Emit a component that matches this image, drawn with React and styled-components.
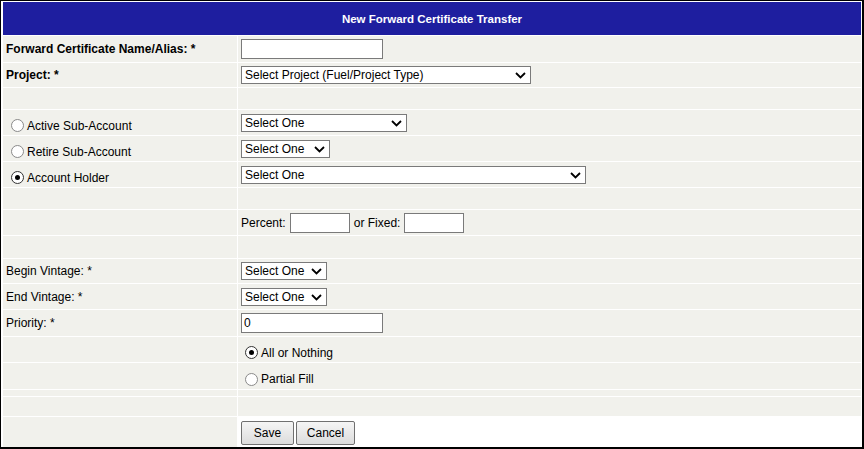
import React from 'react';
import styled, { createGlobalStyle } from 'styled-components';

const GlobalStyle = createGlobalStyle`
  body {
    margin: 0;
    background: #fff;
    font-family: "Liberation Sans", Arial, sans-serif;
    font-size: 12px;
    color: #000;
  }
`;

const Frame = styled.div`
  box-sizing: border-box;
  width: 864px;
  height: 449px;
  background: #fff;
  border-style: solid;
  border-color: #000;
  border-width: 1px 2px 2px 1px;
  padding: 1px 1px 0 2px;
`;

const Table = styled.div`
  display: flex;
  flex-direction: column;
  gap: 1px;
`;

const Header = styled.div`
  height: 33px;
  background: #1e1e9f;
  color: #fff;
  font-weight: bold;
  font-size: 11.5px;
  display: flex;
  align-items: center;
  justify-content: center;
`;

const Row = styled.div`
  display: grid;
  grid-template-columns: 234px 1fr;
  column-gap: 1px;
  height: ${(p) => p.$h}px;
`;

const Cell = styled.div`
  display: flex;
  align-items: center;
  gap: 4px;
  padding: 0 3px;
  background: ${(p) => (p.$blank ? '#fff' : '#f1f1ec')};
  font-weight: ${(p) => (p.$bold ? 'bold' : 'normal')};
  white-space: nowrap;
`;

// radio rows sit a few pixels below the row's middle
const RadioLabel = styled.label`
  display: flex;
  align-items: center;
  padding-top: 6px;
`;

const Radio = styled.input.attrs({ type: 'radio' })`
  appearance: none;
  box-sizing: border-box;
  width: 13px;
  height: 13px;
  margin: 0 3px 0 ${(p) => p.$inset ?? 5}px;
  border: 1px solid #8a8a8a;
  border-radius: 50%;
  background: #fff;
  display: grid;
  place-items: center;

  &:checked {
    border-color: #333;
  }

  &:checked::after {
    content: '';
    width: 5px;
    height: 5px;
    border-radius: 50%;
    background: #000;
  }
`;

const TextInput = styled.input`
  box-sizing: border-box;
  width: ${(p) => p.$w}px;
  height: 20px;
  margin: 0;
  padding: 0 2px;
  border: 1px solid #7a7a7a;
  font: 12px "Liberation Sans", Arial, sans-serif;
`;

const SelectBox = styled.span`
  position: relative;
  display: inline-flex;
  width: ${(p) => p.$w}px;
  height: 18px;
`;

const NativeSelect = styled.select`
  appearance: none;
  box-sizing: border-box;
  width: 100%;
  height: 100%;
  margin: 0;
  padding: 0 0 0 3px;
  border: 1px solid #7a7a7a;
  border-radius: 0;
  background: #fff;
  color: #000;
  font: 12px "Liberation Sans", Arial, sans-serif;
`;

const Chevron = styled.svg`
  position: absolute;
  right: 5px;
  top: 6px;
  pointer-events: none;
`;

const Button = styled.button`
  box-sizing: border-box;
  width: ${(p) => p.$w}px;
  height: 24px;
  margin: 0;
  padding: 0;
  border: 1px solid #707070;
  border-radius: 2px;
  background: linear-gradient(#f5f5f5, #dcdcdc);
  color: #000;
  font: 12px "Liberation Sans", Arial, sans-serif;
`;

const Buttons = styled.div`
  display: flex;
  gap: 2px;
  align-self: flex-end;
  margin-bottom: 2px;
`;

const Select = ({ width, children }) => (
  <SelectBox $w={width}>
    <NativeSelect defaultValue="">
      <option value="">{children}</option>
    </NativeSelect>
    <Chevron width="11" height="7" viewBox="0 0 11 7">
      <polyline points="1,1 5.5,5.5 10,1" fill="none" stroke="#000" strokeWidth="1.8" />
    </Chevron>
  </SelectBox>
);

const Spacer = ({ h }) => (
  <Row $h={h}>
    <Cell />
    <Cell />
  </Row>
);

const App = () => (
  <>
    <GlobalStyle />
    <Frame>
      <Table>
        <Header>New Forward Certificate Transfer</Header>

        <Row $h={26}>
          <Cell $bold>Forward Certificate Name/Alias: *</Cell>
          <Cell><TextInput $w={142} /></Cell>
        </Row>
        <Row $h={24}>
          <Cell $bold>Project: *</Cell>
          <Cell><Select width={290}>Select Project (Fuel/Project Type)</Select></Cell>
        </Row>
        <Spacer h={21} />

        <Row $h={25}>
          <Cell><RadioLabel><Radio name="acct" />Active Sub-Account</RadioLabel></Cell>
          <Cell><Select width={166}>Select One</Select></Cell>
        </Row>
        <Row $h={25}>
          <Cell><RadioLabel><Radio name="acct" />Retire Sub-Account</RadioLabel></Cell>
          <Cell><Select width={89}>Select One</Select></Cell>
        </Row>
        <Row $h={25}>
          <Cell><RadioLabel><Radio name="acct" defaultChecked />Account Holder</RadioLabel></Cell>
          <Cell><Select width={345}>Select One</Select></Cell>
        </Row>
        <Spacer h={21} />

        <Row $h={25}>
          <Cell />
          <Cell>
            Percent: <TextInput $w={60} /> or Fixed: <TextInput $w={60} />
          </Cell>
        </Row>
        <Spacer h={22} />

        <Row $h={24}>
          <Cell>Begin Vintage: *</Cell>
          <Cell><Select width={86}>Select One</Select></Cell>
        </Row>
        <Row $h={25}>
          <Cell>End Vintage: *</Cell>
          <Cell><Select width={86}>Select One</Select></Cell>
        </Row>
        <Row $h={26}>
          <Cell>Priority: *</Cell>
          <Cell><TextInput $w={142} defaultValue="0" /></Cell>
        </Row>
        <Row $h={25}>
          <Cell />
          <Cell><RadioLabel><Radio name="fill" $inset={4} defaultChecked />All or Nothing</RadioLabel></Cell>
        </Row>
        <Row $h={26}>
          <Cell />
          <Cell><RadioLabel><Radio name="fill" $inset={4} />Partial Fill</RadioLabel></Cell>
        </Row>
        <Spacer h={6} />
        <Spacer h={19} />

        <Row $h={30}>
          <Cell />
          <Cell $blank>
            <Buttons>
              <Button $w={53}>Save</Button>
              <Button $w={59}>Cancel</Button>
            </Buttons>
          </Cell>
        </Row>
      </Table>
    </Frame>
  </>
);

export default App;
